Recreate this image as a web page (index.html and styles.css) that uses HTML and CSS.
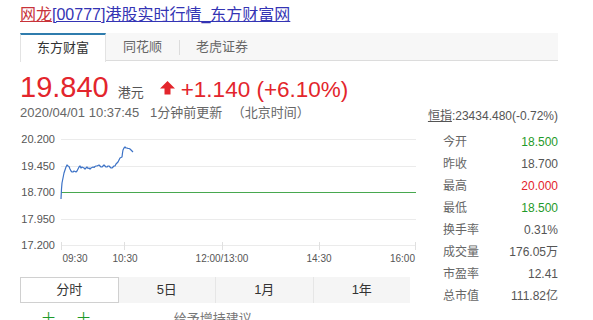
FILE: index.html
```html
<!DOCTYPE html>
<html lang="zh-CN">
<head>
    <meta charset="UTF-8">
    <meta name="viewport" content="width=device-width, initial-scale=1.0">
    <title>网龙[00777]港股实时行情_东方财富网</title>
    <link rel="stylesheet" href="styles.css">
</head>
<body>
    <div class="container">
        <h1 class="title"><a href="#" class="brand">网龙</a><a href="#" class="title-link">[00777]港股实时行情_东方财富网</a></h1>

        <div class="source-tabs">
            <div class="source-tab active">东方财富</div>
            <div class="source-tab">同花顺</div>
            <div class="source-tab sep">老虎证券</div>
        </div>

        <div class="quote">
            <span class="price">19.840</span>
            <span class="currency">港元</span>
            <svg class="arrow" width="15" height="14" viewBox="0 0 15 14">
                <polygon points="7.5,0 15,7.5 10.5,7.5 10.5,13.5 4.5,13.5 4.5,7.5 0,7.5" fill="#e3252c"/>
            </svg>
            <span class="change">+1.140 (+6.10%)</span>
        </div>

        <div class="meta">
            <div class="time">
                <span>2020/04/01 10:37:45</span>
                <span class="updated">1分钟前更新</span>
                <span class="zone">（北京时间）</span>
            </div>
            <div class="index"><a href="#">恒指</a>:23434.480(-0.72%)</div>
        </div>

        <div class="main">
            <div class="chart-col">
                <svg class="chart" width="400" height="140" viewBox="0 0 400 140">
                    <g stroke="#ebebeb" stroke-width="1">
                        <line x1="41" y1="10.5" x2="396" y2="10.5"/>
                        <line x1="41" y1="37.5" x2="396" y2="37.5"/>
                        <line x1="41" y1="90.5" x2="396" y2="90.5"/>
                        <line x1="41" y1="116.5" x2="396" y2="116.5"/>
                    </g>
                    <g stroke="#e0e0e0" stroke-width="1">
                        <line x1="41.5" y1="113" x2="41.5" y2="121"/>
                        <line x1="104.5" y1="113" x2="104.5" y2="121"/>
                        <line x1="202.5" y1="113" x2="202.5" y2="121"/>
                        <line x1="299.5" y1="113" x2="299.5" y2="121"/>
                        <line x1="395.5" y1="113" x2="395.5" y2="121"/>
                    </g>
                    <line x1="41" y1="63.5" x2="396" y2="63.5" stroke="#47a84f" stroke-width="1"/>
                    <polyline fill="none" stroke="#3c72c6" stroke-width="1.2" stroke-linejoin="round"
                        points="41,70 41.5,60 42,54 43,49 44,44 45,41 46,38 47,36 48,37 49,37.5 50,40 51,42 52,43 53,43 54,42 55,42.5 56,43 57,42 58,40 59,38 60,37 61,39 62,38 63,38.5 64,39 65,40 66,39 67,38 68,39.5 69,39 70,40 71,39 72,38.5 73,38 74,38.5 75,37.5 76,37 77,37 78,36.5 79,36 80,37 81,38 82,38 83,37 84,36 85,37 86,38 87,38 88,37 89,37 90,38 91,39 92,39 93,38 94,37 95,37 96,35 97,34 98,33 99,31 100,29 101,28.5 102,28 102.5,24 103,21 104,19 105,18 106,19 107,19 108,19.5 109,19.5 110,20 111,21 112,22 113,23"/>
                    <g class="ylab">
                        <text x="35" y="14" text-anchor="end">20.200</text>
                        <text x="35" y="41" text-anchor="end">19.450</text>
                        <text x="35" y="67" text-anchor="end">18.700</text>
                        <text x="35" y="94" text-anchor="end">17.950</text>
                        <text x="35" y="120" text-anchor="end">17.200</text>
                    </g>
                    <g class="xlab">
                        <text x="55" y="133" text-anchor="middle">09:30</text>
                        <text x="105" y="133" text-anchor="middle">10:30</text>
                        <text x="202" y="133" text-anchor="middle">12:00/13:00</text>
                        <text x="299" y="133" text-anchor="middle">14:30</text>
                        <text x="395" y="133" text-anchor="end">16:00</text>
                    </g>
                </svg>
                <div class="range-tabs">
                    <div class="range-tab active">分时</div>
                    <div class="range-tab">5日</div>
                    <div class="range-tab">1月</div>
                    <div class="range-tab">1年</div>
                </div>
            </div>

            <div class="stats">
                <div class="stat"><span class="label">今开</span><span class="value green">18.500</span></div>
                <div class="stat"><span class="label">昨收</span><span class="value">18.700</span></div>
                <div class="stat"><span class="label">最高</span><span class="value red">20.000</span></div>
                <div class="stat"><span class="label">最低</span><span class="value green">18.500</span></div>
                <div class="stat"><span class="label">换手率</span><span class="value">0.31%</span></div>
                <div class="stat"><span class="label">成交量</span><span class="value">176.05万</span></div>
                <div class="stat"><span class="label">市盈率</span><span class="value">12.41</span></div>
                <div class="stat"><span class="label">总市值</span><span class="value">111.82亿</span></div>
            </div>
        </div>

        <div class="more">
            <span class="tag">十</span><span class="tag">十</span>
            <span class="note">给予增持建议</span>
        </div>
    </div>
</body>
</html>
```

FILE: styles.css
```css
html, body {
    margin: 0;
    padding: 0;
    height: 320px;
    overflow: hidden;
    background: #fff;
}
body {
    font-family: "Liberation Sans", Arial, "Noto Sans CJK SC", sans-serif;
    color: #333;
}
.container {
    width: 538px;
    margin-left: 20px;
}
.title {
    margin: 0;
    padding-top: 5px;
    font-size: 16px;
    line-height: 20px;
    font-weight: normal;
}
.title a {
    text-decoration: underline;
}
.brand {
    color: #c8333a;
}
.title-link {
    color: #3434b4;
}

.source-tabs {
    display: flex;
    margin-top: 8px;
    height: 27px;
    background: #f7f7f7;
    border-bottom: 1px solid #dcdcdc;
}
.source-tab {
    position: relative;
    padding: 0 17px;
    font-size: 13px;
    line-height: 27px;
    color: #666;
}
.source-tab.active {
    background: #fff;
    color: #333;
    border-top: 2px solid #2f7cad;
    border-left: 1px solid #e3e3e3;
    border-right: 1px solid #e3e3e3;
    line-height: 26px;
    height: 26px;
    margin-bottom: -1px;
    padding: 0 16px 1px;
}
.source-tab.sep::before {
    content: "";
    position: absolute;
    left: 0;
    top: 7px;
    height: 15px;
    border-left: 1px solid #dcdcdc;
}

.quote {
    display: flex;
    align-items: baseline;
    margin-top: 8px;
    height: 36px;
    line-height: 36px;
}
.price {
    font-size: 29px;
    color: #e3252c;
}
.currency {
    font-size: 13px;
    color: #555;
    margin-left: 9px;
}
.arrow {
    margin-left: 16px;
    align-self: center;
    margin-top: 2px;
}
.change {
    font-size: 22.5px;
    color: #e3252c;
    margin-left: 6px;
}

.meta {
    display: flex;
    justify-content: space-between;
    align-items: flex-start;
    height: 22px;
}
.time {
    font-size: 13px;
    line-height: 16px;
    color: #666;
}
.updated {
    margin-left: 7px;
}
.zone {
    margin-left: 6px;
}
.index {
    font-size: 12px;
    line-height: 22px;
    color: #555;
}
.index a {
    color: #555;
    text-decoration: underline;
}

.main {
    display: flex;
    margin-top: 2px;
}
.chart-col {
    width: 400px;
}
.chart {
    display: block;
}
.ylab text {
    font-size: 11px;
    fill: #555;
    font-family: "Liberation Sans", Arial, sans-serif;
}
.xlab text {
    font-size: 10px;
    fill: #555;
    font-family: "Liberation Sans", Arial, sans-serif;
}

.range-tabs {
    display: flex;
    width: 390px;
    height: 26px;
    margin-top: 8px;
    background: #f5f5f5;
}
.range-tab {
    flex: 1;
    text-align: center;
    font-size: 13px;
    line-height: 26px;
    color: #333;
    border-left: 1px solid #e6e6e6;
}
.range-tab:first-child {
    border-left: none;
}
.range-tab.active {
    background: #fff;
    border: 1px solid #d0d0d0;
    line-height: 24px;
}
.range-tab.active + .range-tab {
    border-left: none;
}

.stats {
    flex: 1;
    padding-left: 23px;
    padding-top: 2px;
}
.stat {
    display: flex;
    justify-content: space-between;
    font-size: 12px;
    line-height: 22px;
}
.label {
    color: #666;
}
.value {
    color: #555;
}
.green {
    color: #1f9a2a;
}
.red {
    color: #e3252c;
}

.more {
    margin-top: 2px;
    font-size: 13px;
    line-height: 20px;
}
.tag {
    color: #1f9a2a;
    margin-left: 22px;
}
.note {
    color: #777;
    margin-left: 80px;
}
```
